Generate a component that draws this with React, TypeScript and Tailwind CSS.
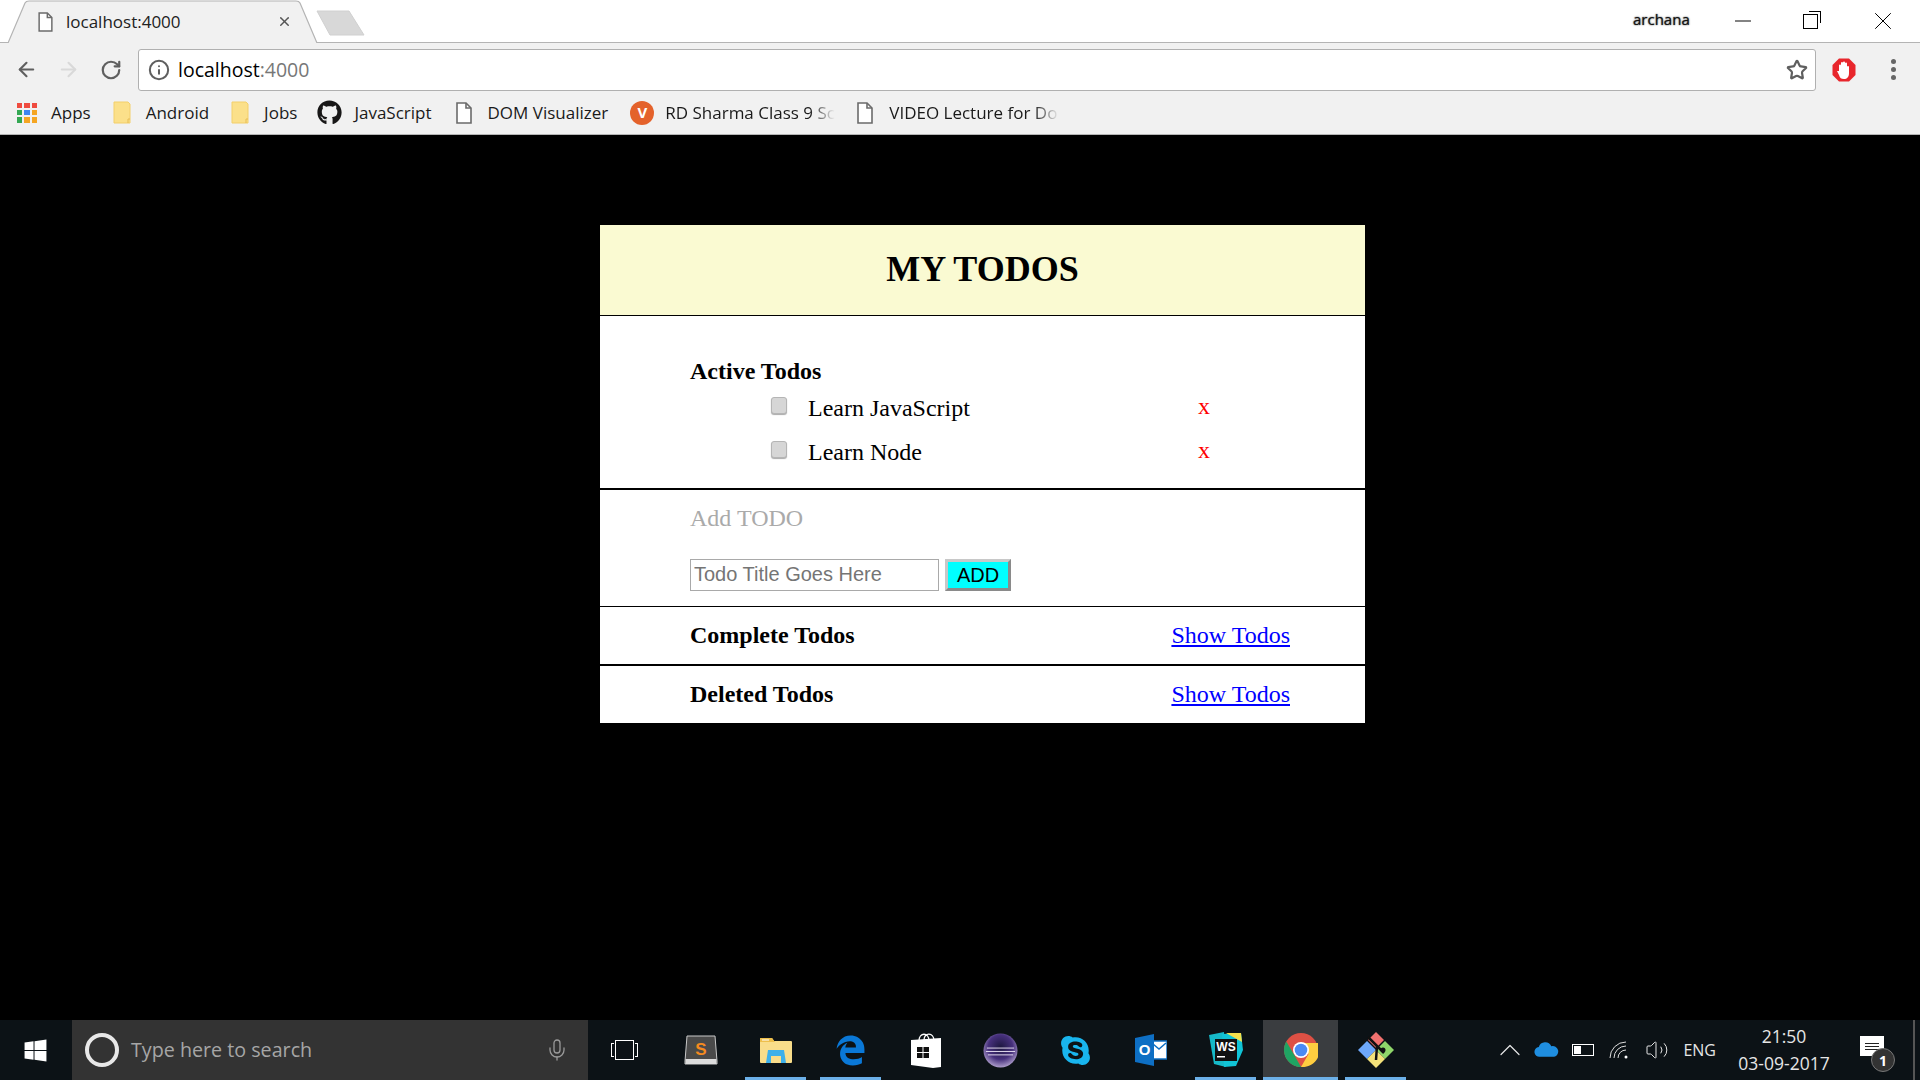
import { ArrowLeft, ArrowRight, RotateCw, Info, Star, X, Minus, Mic, ChevronUp, Volume2 } from "lucide-react";
import { FaGithub, FaWindows, FaSkype } from "react-icons/fa";
import { FaEdgeLegacy } from "react-icons/fa6";

const serif = "font-['Liberation_Serif',serif]";

function DocIcon({ className }: { className: string }) {
  return (
    <svg viewBox="0 0 16 22" className={className} fill="none" stroke="#6b6b6b" strokeWidth="1.6">
      <path d="M1 1h9l5 5v15H1z" fill="#fff" />
      <path d="M10 1v5h5" />
    </svg>
  );
}

function FolderIcon() {
  return (
    <svg viewBox="0 0 18 23" className="w-[18px] h-[23px]">
      <path d="M1 1h14l2 2v19H1z" fill="#fbe08a" stroke="#f3cf6b" strokeWidth="1" />
      <path d="M15 22v-4h2" fill="none" stroke="#e6bd55" strokeWidth="1" />
    </svg>
  );
}

function AppsGrid() {
  const colors = ["#ef4b3f", "#ef4b3f", "#ef4b3f", "#34a853", "#3f86f0", "#f5a623", "#34a853", "#f5a623", "#f5a623"];
  return (
    <div className="grid grid-cols-3 gap-[2px] w-[20px] h-[20px]">
      {colors.map((c, i) => (
        <div key={i} style={{ backgroundColor: c }} />
      ))}
    </div>
  );
}

function Bookmark({ icon, label, className, fade }: { icon: React.ReactNode; label: string; className: string; fade?: boolean }) {
  return (
    <div className={"flex items-center shrink-0 " + className}>
      {icon}
      <span
        className={
          "text-[17px] text-[#1a1a1a] whitespace-nowrap " +
          (fade ? "w-[170px] [mask-image:linear-gradient(to_right,black_85%,transparent)]" : "")
        }
      >
        {label}
      </span>
    </div>
  );
}

function ChromeBar() {
  return (
    <div className="font-['Open_Sans',sans-serif] shrink-0">
      {/* tab strip */}
      <div className="h-[43px] bg-white border-b border-[#b4b4b4] flex relative">
        <div className="relative w-[310px] ml-[8px] h-[43px] flex items-center shrink-0">
          <svg viewBox="0 0 310 43" className="absolute inset-0 w-[310px] h-[43px]">
            <path d="M0 43 L17 3 Q18 1 21 1 H288 Q291 1 292 3 L309 43" fill="#f1f1f1" stroke="#b4b4b4" strokeWidth="1.2" />
          </svg>
          <DocIcon className="relative ml-[30px] w-[15px] h-[20px]" />
          <span className="relative ml-[13px] text-[17px] text-[#222] whitespace-nowrap">localhost:4000</span>
          <X className="relative ml-auto mr-[26px] w-[15px] h-[15px] text-[#555]" strokeWidth={2.4} />
        </div>
        <svg viewBox="0 0 50 26" className="w-[50px] h-[26px] mt-[10px] -ml-[3px] shrink-0">
          <path d="M2 1 H34 L49 25 H15 Z" fill="#d8d8d8" stroke="#d0d0d0" strokeWidth="1" strokeLinejoin="round" />
        </svg>
        <span className="absolute left-[1633px] top-[8px] text-[15px] text-[#111] [text-shadow:0_0_2px_#777,0_0_1px_#555]">archana</span>
        <div className="ml-auto flex items-center text-black shrink-0">
          <Minus className="w-[26px] h-[26px] mr-[47px]" strokeWidth={0.9} />
          <div className="relative w-[15px] h-[15px] mt-[1px] mr-[50px] border border-black">
            <div className="absolute -top-[4px] -right-[4px] w-[12px] h-[12px] border-t border-r border-black" />
          </div>
          <X className="w-[30px] h-[30px] mr-[22px]" strokeWidth={0.8} />
        </div>
      </div>
      {/* toolbar */}
      <div className="h-[48px] bg-[#f1f1f1] flex items-center pt-[5px] relative">
        <ArrowLeft className="ml-[15px] w-[23px] h-[23px] text-[#5f5f5f] shrink-0" strokeWidth={2.2} />
        <ArrowRight className="ml-[19px] w-[23px] h-[23px] text-[#d9d9d9] shrink-0" strokeWidth={2.2} />
        <RotateCw className="ml-[20px] w-[22px] h-[22px] text-[#5f5f5f] shrink-0" strokeWidth={2.4} />
        <div className="ml-[16px] w-[1678px] h-[42px] bg-white border border-[#b0b0b0] rounded-[3px] flex items-center shrink-0">
          <Info className="ml-[9px] w-[22px] h-[22px] text-[#5f5f5f]" strokeWidth={2.2} />
          <span className="ml-[8px] text-[19.5px] text-black">
            localhost<span className="text-[#777]">:4000</span>
          </span>
          <Star className="ml-auto mr-[7px] w-[22px] h-[22px] text-[#5f5f5f]" strokeWidth={2.4} />
        </div>
        <svg viewBox="0 0 24 24" className="ml-[16px] w-[24px] h-[24px] shrink-0">
          <path d="M7 0.5H17L23.5 7V17L17 23.5H7L0.5 17V7Z" fill="#e8262c" />
          <path d="M7 13V7.5a1 1 0 0 1 2 0V5a1 1 0 0 1 2 0V4.5a1 1 0 0 1 2 0V5.5a1 1 0 0 1 2 0V9a1 1 0 0 1 2 0V15c0 4-2 6-5 6s-4-1-5-4l-2-4z" fill="#fff" />
        </svg>
        <div className="ml-[35px] flex flex-col gap-[3px] shrink-0">
          <div className="w-[5px] h-[5px] rounded-full bg-[#666]" />
          <div className="w-[5px] h-[5px] rounded-full bg-[#666]" />
          <div className="w-[5px] h-[5px] rounded-full bg-[#666]" />
        </div>
      </div>
      {/* bookmarks */}
      <div className="h-[44px] bg-[#f1f1f1] border-b border-[#b4b4b4] flex items-center relative">
        <Bookmark className="ml-[17px] gap-[14px]" icon={<AppsGrid />} label="Apps" />
        <Bookmark className="ml-[22px] gap-[15px]" icon={<FolderIcon />} label="Android" />
        <Bookmark className="ml-[22px] gap-[15px]" icon={<FolderIcon />} label="Jobs" />
        <Bookmark className="ml-[20px] gap-[12px]" icon={<FaGithub className="w-[25px] h-[25px] text-[#181717]" />} label="JavaScript" />
        <Bookmark className="ml-[24px] gap-[16px]" icon={<DocIcon className="w-[16px] h-[24px]" />} label="DOM Visualizer" />
        <Bookmark
          className="ml-[22px] gap-[11px]"
          icon={
            <div className="w-[24px] h-[24px] rounded-full bg-[#e4622b] flex items-center justify-center text-white text-[15px] font-bold">
              V
            </div>
          }
          label="RD Sharma Class 9 Sc"
          fade
        />
        <Bookmark className="ml-[22px] gap-[16px]" icon={<DocIcon className="w-[16px] h-[24px]" />} label="VIDEO Lecture for Do" fade />
      </div>
    </div>
  );
}

function TodoRow({ label }: { label: string }) {
  return (
    <div className="flex items-center h-[44px] ml-[171px]">
      <input type="checkbox" className="appearance-none w-[16px] h-[17px] -mt-[8px] rounded-[3px] border border-[#b5b5b5] bg-[#d6d6d6] shadow-[0_1px_1px_#aaa] shrink-0" />
      <span className="ml-[21px] w-[390px] -mt-[2px] text-[24px] text-black">{label}</span>
      <span className="text-[24px] leading-none text-[#ff0000] -mt-[7px]">x</span>
    </div>
  );
}

function FooterRow({ title }: { title: string }) {
  return (
    <div className="h-[57px] pb-[2px] flex items-center justify-between pl-[90px] pr-[75px]">
      <span className="text-[24px] font-bold text-black">{title}</span>
      <a href="#" className="text-[24px] text-[#0000ff] underline">
        Show Todos
      </a>
    </div>
  );
}

function TodoCard() {
  return (
    <div className={"ml-[600px] mt-[90px] w-[765px] bg-white " + serif}>
      <div className="h-[91px] pb-[2px] bg-[#fafad2] border-b border-black flex items-center justify-center">
        <h1 className="text-[36px] font-bold text-black">MY TODOS</h1>
      </div>
      <div className="h-[174px] border-b-2 border-black pt-[39px]">
        <div className="pl-[90px] text-[24px] leading-[32px] font-bold text-black">Active Todos</div>
        <TodoRow label="Learn JavaScript" />
        <TodoRow label="Learn Node" />
      </div>
      <div className="h-[117px] border-b border-black pl-[90px] pt-[12px]">
        <div className="text-[24px] leading-[32px] text-[#aaaaaa]">Add TODO</div>
        <div className="flex mt-[25px] gap-[6px] font-['Liberation_Sans',sans-serif]">
          <input
            placeholder="Todo Title Goes Here"
            className="w-[249px] h-[32px] border border-[#a9a9a9] px-[3px] pb-[2px] text-[20px] placeholder:text-[#757575] outline-none"
          />
          <button className="w-[66px] h-[32px] bg-[#00ffff] border-[3px] border-t-[#c8c8c8] border-l-[#c8c8c8] border-r-[#8a8a8a] border-b-[#8a8a8a] text-[20px] leading-none pb-[1px] text-black">
            ADD
          </button>
        </div>
      </div>
      <FooterRow title="Complete Todos" />
      <div className="border-t-2 border-black">
        <FooterRow title="Deleted Todos" />
      </div>
    </div>
  );
}

function TaskCell({ children, bar, active }: { children: React.ReactNode; bar?: boolean; active?: boolean }) {
  return (
    <div className={"relative w-[75px] h-[60px] flex items-center justify-center shrink-0 " + (active ? "bg-[#3a3d40]" : "")}>
      {children}
      {bar && <div className={"absolute bottom-0 h-[3px] bg-[#6cb0e8] " + (active ? "inset-x-0" : "inset-x-[7px]")} />}
    </div>
  );
}

function Sublime() {
  return (
    <svg viewBox="0 0 34 30" className="w-[34px] h-[30px]">
      <path d="M3 1H31L33 26V29H1V26Z" fill="#4a4a4a" stroke="#c8c8c8" strokeWidth="1" />
      <rect x="1.5" y="24" width="31" height="5" fill="#dcdcdc" />
      <text x="17" y="20" textAnchor="middle" fontSize="17" fontWeight="700" fill="#f58a1f" fontFamily="Liberation Sans">S</text>
    </svg>
  );
}

function Explorer() {
  return (
    <svg viewBox="0 0 32 27" className="w-[32px] h-[27px]">
      <path d="M0 2a1 1 0 0 1 1-1H12l2 3H31a1 1 0 0 1 1 1V25a1 1 0 0 1-1 1H1a1 1 0 0 1-1-1Z" fill="#f9dd8a" />
      <path d="M0 2a1 1 0 0 1 1-1H12l3 4H0Z" fill="#eebf4b" />
      <rect x="2" y="2.5" width="7" height="1" fill="#fff" />
      <path d="M6 26L8 13H24L26 26H21V19H11V26Z" fill="#3eb0ea" />
    </svg>
  );
}

function Store() {
  return (
    <svg viewBox="0 0 32 36" className="w-[32px] h-[36px]">
      <path d="M9 9C9 0 19 0 19 9M14 8C14 0 24 0 24 9" fill="none" stroke="#fff" strokeWidth="1.3" />
      <path d="M1 8L31 6V35L23 36L1 33Z" fill="#fff" />
      <path d="M7 15h5.500v5H7zM13.500 15H19v5h-5.500zM7 21h5.500v5H7zM13.500 21H19v5h-5.500z" fill="#111" />
    </svg>
  );
}

function Eclipse() {
  return (
    <svg viewBox="0 0 36 36" className="w-[35px] h-[35px]">
      <defs>
        <radialGradient id="ecl" cx="0.5" cy="0.4" r="0.65">
          <stop offset="0" stopColor="#1d1740" />
          <stop offset="0.55" stopColor="#46307c" />
          <stop offset="1" stopColor="#c4b4dc" />
        </radialGradient>
      </defs>
      <circle cx="18" cy="18" r="17.500" fill="url(#ecl)" />
      <path d="M4 15.500H32M3 19H33M5 22.500H31" stroke="#e4dcef" strokeWidth="1" />
    </svg>
  );
}

function Outlook() {
  return (
    <svg viewBox="0 0 32 32" className="w-[32px] h-[32px]">
      <rect x="17" y="7" width="15" height="18" fill="#fff" stroke="#0e6fc4" strokeWidth="1.5" />
      <path d="M18 10l6 5 7-6" fill="none" stroke="#0e6fc4" strokeWidth="1.5" />
      <path d="M0 4L19 0V32L0 28Z" fill="#0e6fc4" />
      <text x="9.500" y="21" textAnchor="middle" fontSize="15" fontWeight="700" fill="#fff" fontFamily="Liberation Sans">O</text>
    </svg>
  );
}

function WebStorm() {
  return (
    <svg viewBox="0 0 36 36" className="w-[36px] h-[36px]">
      <path d="M1 3L16 0L18 35L6 32Z" fill="#16b9c8" />
      <path d="M14 2L33 1L35 18L28 34L16 35Z" fill="#11c4d6" />
      <path d="M18 1L33 1L34 10Z" fill="#f4e04d" />
      <rect x="7" y="7" width="22" height="22" fill="#111" />
      <text x="18" y="19" textAnchor="middle" fontSize="12" fontWeight="700" fill="#fff" fontFamily="Liberation Sans">WS</text>
      <rect x="9" y="24" width="8" height="1.500" fill="#fff" />
    </svg>
  );
}

function ChromeLogo() {
  return (
    <svg viewBox="0 0 34 34" className="w-[34px] h-[34px]">
      <circle cx="17" cy="17" r="17" fill="#dd5044" />
      <path d="M17 34A17 17 0 0 1 2.300 8.500L10 21.500L17 34Z" fill="#1fa463" />
      <path d="M17 34L24.500 21L17 10H34A17 17 0 0 1 17 34Z" fill="#ffcd40" />
      <circle cx="17" cy="17" r="8" fill="#fff" />
      <circle cx="17" cy="17" r="6.300" fill="#4a8af4" />
    </svg>
  );
}

function Kraken() {
  return (
    <svg viewBox="0 0 36 36" className="w-[36px] h-[36px]">
      <path d="M18 19L27 10L36 19L27 28Z" fill="#8fd66a" transform="translate(0 -1)" />
      <path d="M0 19L9 10L18 19L9 28Z" fill="#6ea8fb" transform="translate(0 -1)" />
      <path d="M9 27L18 18L27 27L18 36Z" fill="#f4e27a" />
      <path d="M10 8L18 0L26 8L18 16Z" fill="#f0716f" />
      <path d="M10 5L19 14M19 14L26 21M19 14L18 28" stroke="#111" strokeWidth="2.500" fill="none" />
      <circle cx="25" cy="18" r="2.500" fill="#111" />
    </svg>
  );
}

function Taskbar() {
  return (
    <div className="h-[60px] bg-[#0c1216] flex text-white font-['Open_Sans',sans-serif] shrink-0">
      <div className="w-[72px] pr-[2px] flex items-center justify-center shrink-0">
        <FaWindows className="w-[25px] h-[25px] text-white" />
      </div>
      <div className="w-[516px] bg-[#333333] flex items-center shrink-0">
        <div className="ml-[13px] w-[34px] h-[34px] rounded-full border-[4px] border-[#e8e8e8]" />
        <span className="ml-[12px] text-[19.7px] text-[#a6a6a6]">Type here to search</span>
        <Mic className="ml-auto mr-[19px] w-[24px] h-[24px] text-[#9a9a9a]" strokeWidth={1.3} />
      </div>
      <TaskCell>
        <div className="flex items-center pr-[3px]">
          <div className="w-[3px] h-[14px] border-y border-l border-white" />
          <div className="mx-[1px] w-[19px] h-[20px] border border-white" />
          <div className="w-[3px] h-[14px] border-y border-r border-white" />
        </div>
      </TaskCell>
      <TaskCell><Sublime /></TaskCell>
      <TaskCell bar><Explorer /></TaskCell>
      <TaskCell bar><FaEdgeLegacy className="w-[31px] h-[33px] text-[#0a78d7]" /></TaskCell>
      <TaskCell><Store /></TaskCell>
      <TaskCell><Eclipse /></TaskCell>
      <TaskCell><FaSkype className="w-[33px] h-[33px] text-[#19b5ee]" /></TaskCell>
      <TaskCell><Outlook /></TaskCell>
      <TaskCell bar><WebStorm /></TaskCell>
      <TaskCell bar active><ChromeLogo /></TaskCell>
      <TaskCell bar><Kraken /></TaskCell>
      <div className="ml-auto flex items-center shrink-0 relative">
        <ChevronUp className="w-[36px] h-[36px] text-[#e6e6e6]" strokeWidth={0.8} />
        <svg viewBox="0 0 26 16" className="ml-[6px] w-[25px] h-[16px] shrink-0">
          <path d="M6 15a5 5 0 0 1-1-10 7 7 0 0 1 13-1 5 5 0 0 1 3 11z" fill="#1f8ee0" />
        </svg>
        <div className="ml-[13px] w-[22px] h-[12px] border border-white flex p-[1px] mr-[1px] shrink-0">
          <div className="w-[7px] bg-white" />
        </div>
        <svg viewBox="0 0 20 18" className="ml-[14px] w-[20px] h-[18px] shrink-0" fill="none" stroke="#ddd" strokeWidth="1">
          <path d="M1 17A16 16 0 0 1 17 1M5 17A12 12 0 0 1 17 5M9 17A8 8 0 0 1 17 9" />
          <circle cx="17" cy="16" r="1.500" fill="#fff" stroke="none" />
        </svg>
        <Volume2 className="ml-[16px] w-[24px] h-[24px] text-[#e6e6e6]" strokeWidth={1} />
        <span className="ml-[14px] text-[16px] text-[#e6e6e6]">ENG</span>
        <div className="ml-[21px] w-[94px] flex flex-col items-center text-[17.5px] leading-[27px] text-[#e6e6e6]">
          <span>21:50</span>
          <span>03-09-2017</span>
        </div>
        <div className="ml-[29px] mr-[29px] relative w-[24px] h-[20px] bg-white mb-[8px] flex flex-col items-center justify-center gap-[2px]">
          <div className="w-[14px] h-[1px] bg-[#222]" />
          <div className="w-[14px] h-[1px] bg-[#222]" />
          <div className="w-[14px] h-[1px] bg-[#222]" />
          <div className="absolute left-[11px] top-[12px] w-[24px] h-[24px] rounded-full bg-[#333] border border-[#777] flex items-center justify-center text-[14px] font-bold text-white">
            1
          </div>
        </div>
        <div className="w-[2px] h-[60px] bg-[#555] mr-[5px]" />
      </div>
    </div>
  );
}

export default function App() {
  return (
    <div className="w-[1920px] h-[1080px] flex flex-col overflow-hidden bg-black">
      <ChromeBar />
      <div className="flex-1 min-h-0">
        <TodoCard />
      </div>
      <Taskbar />
    </div>
  );
}
